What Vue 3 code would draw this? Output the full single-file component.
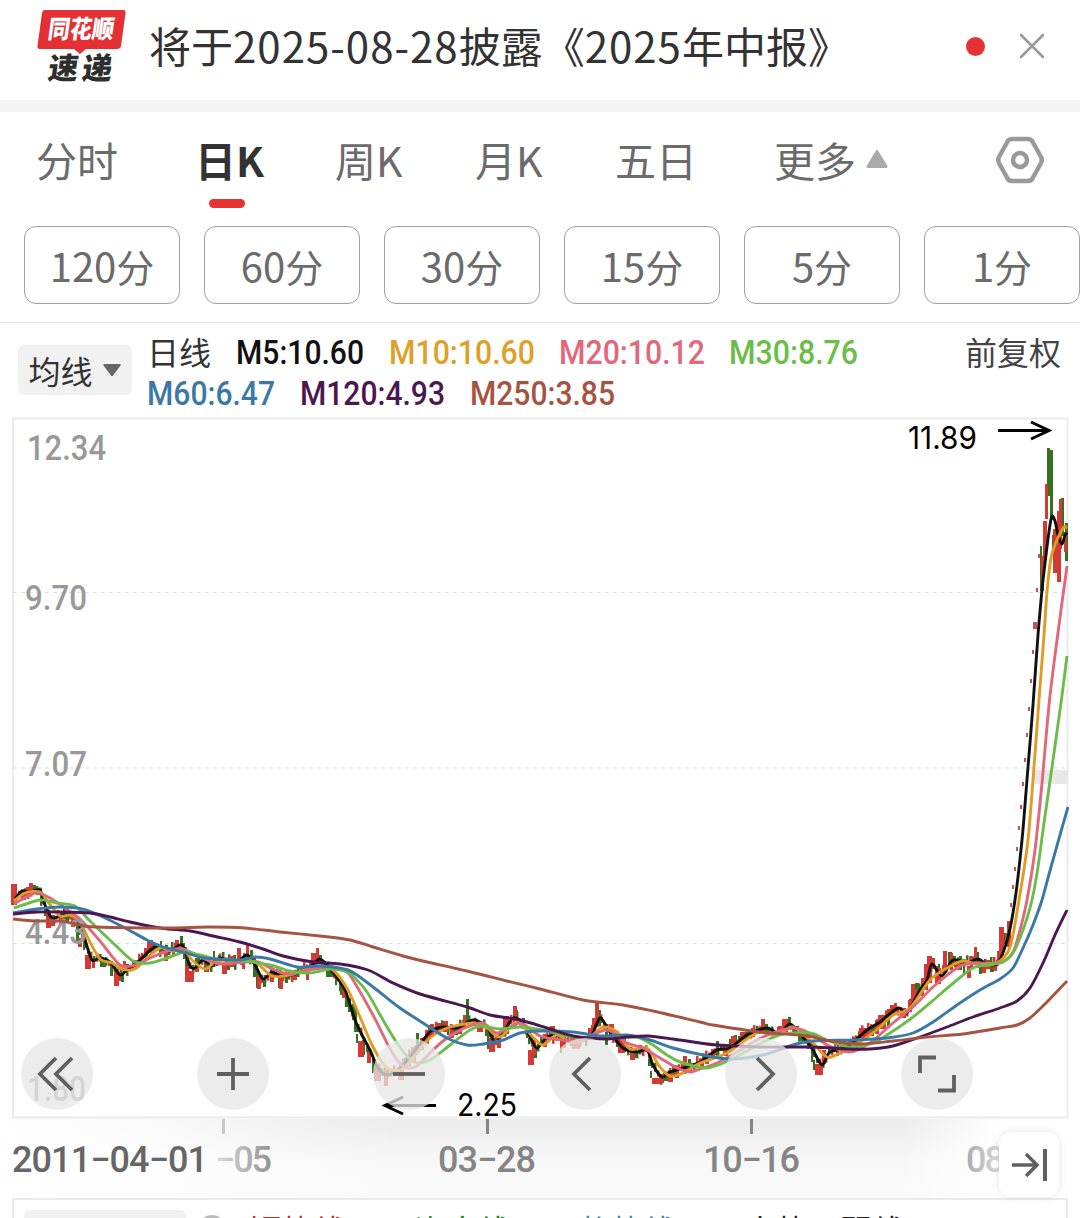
<script setup>
import { ref } from 'vue'

const tabs = ['分时', '日K', '周K', '月K', '五日']
const activeTab = ref('日K')

const periods = [
  { num: '120' },
  { num: '60' },
  { num: '30' },
  { num: '15' },
  { num: '5' },
  { num: '1' },
]

const legendTop = [
  { text: 'M5:10.60', color: '#111111', width: 128, gap: 25 },
  { text: 'M10:10.60', color: '#dda02a', width: 146, gap: 24 },
  { text: 'M20:10.12', color: '#e0687a', width: 146, gap: 24 },
  { text: 'M30:8.76', color: '#6cbc4c', width: 129, gap: 0 },
]

const legendBottom = [
  { text: 'M60:6.47', color: '#3a79a5', width: 128, gap: 25 },
  { text: 'M120:4.93', color: '#4c1650', width: 145, gap: 25 },
  { text: 'M250:3.85', color: '#a55441', width: 145, gap: 0 },
]

const axisLabels = [
  { text: '12.34', x: 27, y: 460, w: 79 },
  { text: '9.70', x: 25, y: 610, w: 62 },
  { text: '7.07', x: 25, y: 776, w: 62 },
  { text: '4.43', x: 25, y: 944, w: 62 },
  { text: '1.80', x: 27, y: 1101, w: 59 },
]

// moving averages as x,y pairs in chart space
const m5 = [15,899,22,891,30,892,40,890,45,905,52,918,62,915,72,914,78,922,85,940,92,960,100,958,110,962,120,975,127,970,140,960,155,947,170,951,182,945,190,966,195,968,203,960,212,966,220,958,235,963,247,955,255,965,263,979,272,972,280,976,295,974,310,967,320,959,332,971,345,990,355,1020,362,1035,370,1050,378,1068,387,1075,400,1068,413,1053,430,1032,443,1027,457,1028,473,1020,487,1027,495,1042,505,1030,513,1018,523,1023,530,1037,537,1048,547,1037,560,1036,573,1043,590,1037,597,1023,601,1018,610,1032,623,1048,637,1052,647,1050,653,1065,662,1077,670,1072,687,1067,700,1062,717,1050,730,1048,747,1035,767,1028,780,1034,790,1024,803,1037,813,1050,822,1065,830,1052,847,1047,867,1030,880,1022,898,1008,907,1013,920,990,927,980,932,964,942,976,953,960,967,963,978,959,987,964,998,963,1008,937,1015,900,1022,840,1028,767,1033,705,1038,635,1042,590,1046,555,1050,525,1052,516,1055,521,1058,535,1062,544,1065,535,1067,533]
const m10 = [14,901,25,893,40,892,48,902,60,916,70,915,80,922,90,942,100,959,112,963,122,969,135,969,147,958,160,948,172,951,183,949,192,960,205,969,215,962,225,963,245,960,257,963,272,976,290,975,305,970,318,966,333,970,348,990,360,1017,373,1047,387,1068,403,1069,417,1053,430,1038,447,1028,473,1023,487,1028,500,1037,517,1022,533,1037,543,1045,557,1035,573,1043,590,1037,603,1027,617,1032,630,1049,647,1048,660,1067,670,1076,683,1073,700,1063,727,1053,757,1033,777,1035,793,1027,813,1043,827,1057,840,1053,860,1042,880,1027,893,1015,910,1008,930,980,947,968,963,961,980,965,997,963,1010,947,1019,900,1028,840,1034,767,1039,700,1044,635,1047,592,1051,558,1057,540,1064,527,1067,528]
const m20 = [14,904,35,893,50,898,65,908,80,919,100,941,120,965,135,965,150,958,170,950,183,949,200,957,220,964,245,962,258,962,275,970,290,974,310,970,330,967,345,971,353,980,373,1015,387,1043,397,1060,407,1068,418,1065,433,1050,447,1038,467,1027,483,1023,497,1033,520,1023,540,1036,563,1040,580,1040,607,1030,627,1043,643,1048,660,1058,677,1068,690,1072,697,1070,717,1063,737,1052,763,1037,793,1028,813,1035,827,1045,850,1052,870,1043,893,1023,913,1007,933,987,957,968,973,963,1000,963,1013,952,1020,930,1027,900,1035,850,1042,783,1049,705,1057,640,1067,566]
const m30 = [14,908,40,900,57,903,75,906,90,921,113,943,133,961,150,963,167,958,185,952,200,955,217,959,245,961,270,965,290,971,310,973,330,969,345,971,353,976,367,992,383,1020,397,1043,410,1059,420,1063,433,1058,450,1045,470,1030,483,1026,500,1029,523,1027,547,1031,573,1037,600,1037,627,1037,640,1038,653,1045,667,1055,680,1062,707,1068,730,1060,763,1042,783,1034,810,1033,827,1040,850,1047,873,1043,890,1033,913,1017,937,997,957,980,973,968,990,964,1003,962,1013,953,1023,930,1032,900,1038,867,1044,823,1052,767,1061,703,1067,656]
const m60 = [13,913,37,909,60,907,82,909,103,917,127,929,147,940,163,947,183,952,205,958,240,960,255,957,270,959,297,967,317,966,333,967,348,970,357,975,377,990,400,1008,423,1023,447,1038,467,1045,483,1044,503,1040,520,1033,540,1031,573,1032,600,1036,627,1035,650,1040,673,1048,703,1055,730,1059,763,1055,793,1045,813,1041,853,1040,887,1038,913,1033,933,1022,957,1005,980,990,1000,979,1013,968,1023,948,1033,925,1042,900,1051,867,1060,835,1068,807]
const m120 = [13,914,37,912,63,912,90,913,110,917,130,922,160,928,190,931,213,936,240,942,263,949,283,956,313,962,340,964,368,970,393,983,420,994,467,1007,490,1015,520,1020,547,1028,573,1036,607,1039,627,1037,648,1036,673,1039,700,1043,717,1045,760,1047,813,1047,847,1049,870,1049,893,1046,920,1037,947,1027,973,1017,1000,1008,1017,1001,1030,988,1043,963,1055,935,1067,910]
const m250 = [13,919,35,921,60,921,80,925,95,927,165,928,210,927,245,928,280,932,320,936,350,940,373,947,403,956,427,962,467,971,507,981,540,989,583,1000,623,1005,653,1011,700,1022,713,1025,760,1032,807,1036,830,1041,860,1044,893,1041,927,1037,963,1034,1000,1028,1017,1025,1030,1018,1047,1002,1067,981]

const averages = [
  { pts: m5, color: '#111111' },
  { pts: m10, color: '#e09c22' },
  { pts: m20, color: '#e0687a' },
  { pts: m30, color: '#6cbc4c' },
  { pts: m60, color: '#3a79a5' },
  { pts: m120, color: '#4c1650' },
  { pts: m250, color: '#a55441' },
]

function linePath(pts) {
  let d = `M${pts[0]} ${pts[1]}`
  for (let i = 0; i < pts.length - 2; i += 2) {
    const at = (k) => {
      const j = Math.min(Math.max(k, 0), pts.length - 2)
      return [pts[j], pts[j + 1]]
    }
    const [p0, p1, p2, p3] = [at(i - 2), at(i), at(i + 2), at(i + 4)]
    const c1 = [p1[0] + (p2[0] - p0[0]) / 7, p1[1] + (p2[1] - p0[1]) / 7]
    const c2 = [p2[0] - (p3[0] - p1[0]) / 7, p2[1] - (p3[1] - p1[1]) / 7]
    d += `C${c1.map((v) => v.toFixed(1))} ${c2.map((v) => v.toFixed(1))} ${p2}`
  }
  return d
}

// x, top, width, height
const redBars = [
  [11,884,6,21],[22,890,4,10],[26,887,3,9],[29,883,4,10],[46,912,5,16],[51,915,4,11],[59,915,4,10],[71,917,4,10],
  [78,938,4,9],[85,955,6,14],[92,959,3,9],[114,970,5,16],[118,972,3,9],[123,961,3,9],[133,960,4,7],[138,956,4,6],
  [144,948,4,9],[147,940,6,12],[164,952,4,9],[172,947,3,9],[175,940,4,12],[185,966,4,16],[188,971,6,11],[195,964,4,8],
  [206,965,3,7],[222,963,5,11],[229,956,5,11],[237,948,4,12],[242,958,3,11],[246,945,3,15],[257,975,4,14],[270,971,4,11],
  [279,974,4,15],[293,970,4,10],[306,968,3,12],[311,953,6,12],[316,948,3,15],[342,991,4,7],[358,1041,6,16],[367,1052,4,11],
  [374,1068,7,13],[384,1070,4,16],[398,1070,6,10],[407,1056,4,10],[412,1048,4,13],[420,1038,4,12],[425,1030,4,14],[430,1024,4,12],[437,1023,4,10],
  [443,1021,5,11],[450,1029,4,9],[457,1025,5,9],[463,1015,3,12],[477,1024,6,8],[489,1038,6,14],[497,1036,4,12],
  [503,1016,6,18],[513,1006,4,22],[528,1050,6,15],[532,1040,4,15],[543,1034,4,13],[550,1026,5,11],[560,1032,6,16],
  [572,1038,8,11],[588,1028,4,12],[592,1018,4,16],[595,1001,4,26],[609,1024,5,10],[618,1037,7,16],[630,1048,5,12],[638,1045,4,7],
  [652,1078,8,6],[659,1074,5,9],[668,1070,5,12],[675,1066,4,12],[683,1056,4,14],[700,1059,4,9],[705,1054,4,10],[711,1049,4,10],
  [724,1048,4,8],[731,1036,5,12],[740,1032,4,12],[751,1028,4,9],[761,1019,4,14],[778,1026,4,8],[782,1019,6,13],
  [815,1064,8,11],[822,1050,4,14],[842,1040,4,8],[848,1039,4,8],[854,1037,4,9],[859,1028,8,10],[867,1028,4,8],[875,1020,4,14],[878,1015,8,14],
  [887,1009,4,10],[890,1005,5,10],[894,1003,3,9],[900,1008,6,10],[908,1000,4,12],[911,984,4,17],[915,990,3,10],
  [921,978,3,18],[924,964,4,26],[927,956,5,27],[932,958,3,11],[935,968,6,16],[943,951,4,19],[950,953,3,17],[956,962,4,8],
  [967,966,4,12],[970,956,3,12],[974,947,3,15],[982,964,4,9],[986,960,4,9],[993,962,4,9],[997,951,3,12],[999,927,5,28],[1007,921,4,26],[1005,934,3,12],
  [1045,484,3,35],[1043,521,4,39],[1041,556,3,35],[1053,529,5,44],[1057,511,4,71],[1059,499,3,50],[1064,532,3,20],
]

const greenBars = [
  [33,885,3,8],[38,888,4,7],[40,893,2,13],[44,900,2,16],[63,915,6,7],[76,923,3,18],[83,938,2,12],[89,956,2,11],
  [100,959,6,8],[110,961,3,15],[121,973,3,9],[126,964,3,7],[160,941,2,14],[165,945,3,9],[180,936,3,11],[183,943,2,16],[185,947,2,33],
  [195,958,3,11],[204,960,3,12],[213,951,2,10],[218,955,2,7],[227,961,3,9],[233,955,3,10],[250,950,3,12],[253,958,3,19],[256,964,2,24],
  [263,979,3,8],[278,972,2,16],[285,974,3,9],[318,955,4,9],[326,970,7,7],[335,972,2,13],[340,981,2,14],[345,993,3,14],[348,998,3,14],[352,1004,2,16],[354,1006,3,26],
  [356,1034,2,9],[362,1040,3,15],[367,1048,3,14],[372,1060,3,13],[404,1058,3,10],[416,1033,3,20],[428,1025,3,9],[455,1027,3,8],
  [466,999,3,24],[485,1026,2,10],[487,1030,2,19],[492,1040,3,10],[515,1010,3,14],[522,1018,3,10],[526,1028,2,10],[534,1048,3,10],
  [560,1040,2,13],[597,1010,4,16],[605,1032,3,13],[616,1031,3,16],[623,1038,3,14],[634,1048,3,10],[648,1059,3,7],[650,1071,2,7],
  [664,1074,4,7],[672,1068,3,9],[688,1059,3,9],[716,1041,3,15],[734,1035,3,9],[745,1032,3,7],[764,1024,4,8],[788,1017,3,13],[793,1026,6,8],
  [800,1032,4,9],[806,1034,3,9],[811,1044,2,18],[813,1060,2,10],[836,1049,3,7],[870,1026,4,10],[887,1018,3,10],[915,983,4,14],
  [938,964,2,16],[948,952,4,14],[953,956,3,8],[959,956,3,14],[963,962,2,11],[976,952,3,12],[979,960,3,14],[990,963,4,9],[1004,933,3,11],
  [1047,448,3,48],[1050,450,3,70],[1040,546,2,45],[1052,535,2,20],[1061,498,3,38],[1065,523,3,38],
]

// one-price limit days on the way up
const limitUps = [[1038,554,4],[1036,588,4],[1033,622,7],[1032,650,4],[1030,679,4],[1028,707,4],[1026,733,4],[1024,758,4],[1022,782,4],[1020,805,4],[1018,826,4],[1016,847,4],[1014,867,4],[1012,885,4],[1010,903,4]]

function priceAt(x) {
  for (let i = 0; i < m5.length - 2; i += 2) {
    if (x <= m5[i + 2]) {
      const t = (x - m5[i]) / (m5[i + 2] - m5[i])
      return m5[i + 1] + t * (m5[i + 3] - m5[i + 1])
    }
  }
  return m5[m5.length - 1]
}

// short daily bars hugging the 5 day average
const dailyBars = []
for (let n = 0; n < 330; n++) {
  const x = 18 + n * 3
  if (x > 1002) break
  const wave = Math.sin(n * 2.3) * 2 + Math.sin(n * 0.71) * 2
  const h = 5 + Math.abs(Math.sin(n * 1.37)) * 4
  const up = priceAt(x + 3) <= priceAt(x - 3)
  dailyBars.push({ x, y: priceAt(x + 2) + wave - h / 2, h, color: up !== (n % 3 === 0) ? '#d33a36' : '#35711f' })
}

const controls = [
  { name: 'first', cx: 57, d: 'M56 1058 L40 1074 L56 1090 M72 1058 L56 1074 L72 1090' },
  { name: 'zoom-in', cx: 233, d: 'M217 1074 H249 M233 1058 V1090' },
  { name: 'zoom-out', cx: 409, d: 'M393 1074 H425' },
  { name: 'prev', cx: 585, d: 'M590 1058 L574 1074 L590 1090' },
  { name: 'next', cx: 761, d: 'M757 1058 L773 1074 L757 1090' },
  { name: 'fullscreen', cx: 937, d: 'M920 1073 V1057.500 H936 M954 1075 V1090.500 H938' },
]
</script>

<template>
  <div class="screen">
    <header class="notice">
      <svg class="logo" width="92" height="84" viewBox="0 0 92 84">
        <path d="M9 2 H87 Q90 2 89.500 5 L85 38 Q84.500 41 81 41 H50 L44 46 L38 41 H4 Q1 41 1.500 38 L6 5 Q6.500 2 9 2Z" fill="#e33033" />
        <text transform="translate(11 30) skewX(-8)" font-size="25" textLength="66" lengthAdjust="spacingAndGlyphs" fill="#fff" class="logo-text">同花顺</text>
        <text transform="translate(11 71) skewX(-8)" font-size="30" fill="#2e2e2e" class="logo-text" textLength="64">速递</text>
      </svg>
      <div class="notice-text">将于<span class="digits">2025-08-28</span>披露《<span class="digits">2025</span>年中报》</div>
      <i class="dot"></i>
      <svg class="close" width="28" height="28" viewBox="0 0 28 28">
        <path d="M3 3 L25 25 M25 3 L3 25" stroke="#999" stroke-width="2.600" stroke-linecap="round" />
      </svg>
    </header>

    <nav class="tabs">
      <button v-for="tab in tabs" :key="tab" class="tab" :class="{ active: tab === activeTab }" @click="activeTab = tab">{{ tab }}</button>
      <button class="tab more">
        更多
        <svg width="24" height="20" viewBox="0 0 24 20"><path d="M11 1.500 Q12 0 13 1.500 L22.500 17 Q23 19 21 19 H3 Q1 19 1.500 17Z" fill="#aaa" /></svg>
      </button>
      <svg class="settings" width="50" height="48" viewBox="0 0 50 48">
        <path d="M17 3 H33 Q36 3 37.500 5.500 L46 21 Q47.500 24 46 27 L37.500 42.500 Q36 45 33 45 H17 Q14 45 12.500 42.500 L4 27 Q2.500 24 4 21 L12.500 5.500 Q14 3 17 3Z" />
        <circle cx="25" cy="24" r="7" />
      </svg>
    </nav>

    <div class="periods">
      <button v-for="p in periods" :key="p.num" class="period"><span>{{ p.num }}</span>分</button>
    </div>

    <section class="legend">
      <button class="indicator">
        均线
        <svg width="20" height="14" viewBox="0 0 20 14"><path d="M2 1 H18 Q19.500 1 18.500 2.500 L11 12.500 Q10 13.500 9 12.500 L1.500 2.500 Q.5 1 2 1Z" fill="#666" /></svg>
      </button>
      <div class="legend-rows">
        <div class="legend-row">
          <span class="legend-name">日线</span>
          <svg v-for="item in legendTop" :key="item.text" :width="item.width" height="41" :style="{ marginRight: item.gap + 'px' }">
            <text x="0" y="29" class="ma" :fill="item.color" :textLength="item.width" lengthAdjust="spacingAndGlyphs">{{ item.text }}</text>
          </svg>
        </div>
        <div class="legend-row second">
          <svg v-for="item in legendBottom" :key="item.text" :width="item.width" height="41" :style="{ marginRight: item.gap + 'px' }">
            <text x="0" y="29" class="ma" :fill="item.color" :textLength="item.width" lengthAdjust="spacingAndGlyphs">{{ item.text }}</text>
          </svg>
        </div>
      </div>
      <span class="adjust">前复权</span>
    </section>

    <svg class="chart" width="1080" height="705" viewBox="0 414 1080 705">
      <rect x="13" y="418.500" width="1054.500" height="699" fill="none" stroke="#ebebeb" stroke-width="2" />
      <path d="M13 592.500 H1067 M13 768 H1067 M13 943.500 H1067" class="grid" />
      <rect x="1033" y="770" width="35" height="14" fill="#e8e8e8" />

      <rect v-for="(b, i) in dailyBars" :key="'d' + i" :x="b.x" :y="b.y" width="2.500" :height="b.h" :fill="b.color" />
      <rect v-for="(b, i) in greenBars" :key="'g' + i" :x="b[0]" :y="b[1]" :width="b[2]" :height="b[3]" fill="#35711f" />
      <rect v-for="(b, i) in redBars" :key="'r' + i" :x="b[0]" :y="b[1]" :width="b[2]" :height="b[3]" fill="#d33a36" />
      <rect v-for="(b, i) in limitUps" :key="'l' + i" :x="b[0]" :y="b[1]" :width="b[2] > 4 ? 4 : 2" :height="b[2]" fill="#c05555" />

      <path v-for="a in averages.slice(0, 4)" :key="a.color" :d="linePath(a.pts)" fill="none" :stroke="a.color" stroke-width="2.900" stroke-linejoin="round" />
      <text v-for="l in axisLabels" :key="l.text" :x="l.x" :y="l.y" class="axis" :textLength="l.w" lengthAdjust="spacingAndGlyphs">{{ l.text }}</text>
      <path v-for="a in averages.slice(4)" :key="a.color" :d="linePath(a.pts)" fill="none" :stroke="a.color" stroke-width="2.900" stroke-linejoin="round" />

      <g class="mark">
        <text x="908" y="448.500" textLength="69" lengthAdjust="spacingAndGlyphs">11.89</text>
        <path d="M998 430.500 H1048 M1031 422 L1049 430.500 L1031 439" />
        <text x="457" y="1115.500" textLength="60" lengthAdjust="spacingAndGlyphs">2.25</text>
        <path d="M436 1105.500 H386 M403 1097 L385 1105.500 L403 1114" />
      </g>

      <g v-for="c in controls" :key="c.name">
        <circle :cx="c.cx" cy="1074" r="36" fill="#e6e6e6" fill-opacity=".76" />
        <path :d="c.d" class="control" />
      </g>
    </svg>

    <svg class="dates" width="1080" height="79" viewBox="0 1119 1080 79">
      <defs>
        <linearGradient id="shadeDown" x1="0" y1="0" x2="0" y2="1">
          <stop offset="0" stop-color="#ebebeb" />
          <stop offset=".55" stop-color="#f8f8f8" />
          <stop offset="1" stop-color="#fafafa" />
        </linearGradient>
        <linearGradient id="fadeLeft">
          <stop offset="0" stop-color="#fff" />
          <stop offset=".35" stop-color="#fff" stop-opacity=".75" />
          <stop offset="1" stop-color="#fff" stop-opacity="0" />
        </linearGradient>
        <linearGradient id="fadeRight">
          <stop offset="0" stop-color="#fff" stop-opacity="0" />
          <stop offset="1" stop-color="#fff" />
        </linearGradient>
        <linearGradient id="dateFade" gradientUnits="userSpaceOnUse" x1="205" y1="0" x2="272" y2="0">
          <stop offset="0" stop-color="#e8e8e8" />
          <stop offset="1" stop-color="#929292" />
        </linearGradient>
        <linearGradient id="endFade" gradientUnits="userSpaceOnUse" x1="966" y1="0" x2="1002" y2="0">
          <stop offset="0" stop-color="#aaa" />
          <stop offset="1" stop-color="#ddd" />
        </linearGradient>
      </defs>
      <rect y="1119" width="1080" height="79" fill="url(#shadeDown)" />
      <rect y="1119" width="400" height="79" fill="url(#fadeLeft)" />
      <rect x="900" y="1119" width="100" height="79" fill="url(#fadeRight)" />
      <rect x="999" y="1119" width="81" height="79" fill="#fff" />
      <path d="M223.500 1119 V1134" stroke="#c8c8c8" stroke-width="3" />
      <path d="M487.500 1119 V1134 M751.500 1119 V1134" stroke="#858585" stroke-width="3" />
      <g class="date">
        <text x="12" y="1172" textLength="196" fill="#666">2011−04−01</text>
        <text x="215" y="1172" textLength="57" fill="url(#dateFade)">−05</text>
        <text x="438" y="1172" textLength="98" fill="#858585">03−28</text>
        <text x="703" y="1172" textLength="97" fill="#858585">10−16</text>
        <text x="966" y="1172" textLength="39" fill="url(#endFade)">08</text>
      </g>
    </svg>

    <section class="sub">
      <div class="sub-btn"></div>
      <i class="help"></i>
      <span class="t-red">短势线</span>
      <span class="t-green">资金线</span>
      <span class="t-blue">趋势线</span>
      <span class="t-black">大势强弱线</span>
    </section>

    <button class="jump">
      <svg width="60" height="66" viewBox="0 0 60 66">
        <path d="M13 33 H38 M27 22 L38 33 L27 44" stroke-width="3.500" />
        <path d="M46 17 V49" stroke-width="4" />
      </svg>
    </button>
  </div>
</template>

<style>
body {
  margin: 0;
  background: #fff;
}
</style>

<style scoped>
.screen {
  position: relative;
  width: 1080px;
  height: 1218px;
  overflow: hidden;
  background: #fff;
  font-family: "Noto Sans CJK SC", sans-serif;
  color: #333;
}

button {
  border: 0;
  padding: 0;
  background: none;
  font-family: inherit;
  cursor: pointer;
}

svg {
  display: block;
  flex: none;
  overflow: visible;
}

.notice {
  box-sizing: border-box;
  height: 112px;
  padding: 0 34px 12px 36px;
  border-bottom: 12px solid #f4f4f4;
  display: flex;
  align-items: center;
}

.logo {
  margin-top: 12px;
}

.logo-text {
  font-weight: 900;
}

.notice-text {
  margin-left: 21px;
  margin-top: 2px;
  font-size: 42px;
  font-weight: 400;
  white-space: nowrap;
  line-height: 60px;
}

.digits {
  letter-spacing: 1px;
}

.dot {
  width: 19px;
  height: 19px;
  margin-left: auto;
  margin-top: 4px;
  border-radius: 50%;
  background: #e63232;
}

.close {
  margin-left: 33px;
  margin-top: 4px;
}

.tabs {
  height: 114px;
  box-sizing: border-box;
  padding: 6px 35px 0 36px;
  display: flex;
  align-items: flex-start;
}

.tab {
  position: relative;
  width: 140px;
  height: 82px;
  line-height: 82px;
  font-size: 41px;
  font-weight: 400;
  color: #6b6b6b;
  text-align: left;
  white-space: nowrap;
}

.tab:first-child {
  width: 159px;
}

.tab.active {
  color: #333;
  font-weight: 700;
}

.tab.active::after {
  content: "";
  position: absolute;
  left: 14px;
  top: 81px;
  width: 36px;
  height: 9px;
  border-radius: 5px;
  background: #e63232;
}

.tab.more {
  display: flex;
  align-items: center;
  gap: 9px;
  margin-left: 19px;
}

.settings {
  margin-left: auto;
  margin-top: 18px;
  fill: none;
  stroke: #999;
  stroke-width: 4.500;
}

.periods {
  display: flex;
  gap: 24px;
  padding-left: 24px;
  height: 96px;
  border-bottom: 1px solid #e6e6e6;
}

.period {
  flex: none;
  box-sizing: border-box;
  width: 156px;
  height: 78px;
  border: 1.500px solid #a0a0a0;
  border-radius: 12px;
  font-size: 38px;
  font-weight: 400;
  color: #6b6b6b;
  line-height: 72px;
}

.period span {
  font-size: 40px;
}

.legend {
  height: 91px;
  box-sizing: border-box;
  display: flex;
  align-items: flex-start;
  padding: 12px 19px 0 18px;
}

.indicator {
  width: 114px;
  height: 50px;
  margin-top: 10px;
  border-radius: 6px;
  background: #f1f1f1;
  color: #333;
  font-size: 32px;
  line-height: 50px;
  display: flex;
  align-items: center;
  justify-content: center;
  gap: 9px;
}

.legend-rows {
  margin-left: 15px;
}

.legend-row {
  display: flex;
  height: 41px;
}

.legend-name {
  width: 89px;
  font-size: 32px;
  line-height: 32px;
}

.ma {
  font: 500 34px Roboto, sans-serif;
}

.adjust {
  margin-left: auto;
  font-size: 32px;
  line-height: 33px;
  color: #444;
}

.grid {
  fill: none;
  stroke: #dedede;
  stroke-width: 1;
  stroke-dasharray: 4 4;
}

.axis {
  font: 500 35px Roboto, sans-serif;
  fill: #999;
}

.mark text {
  font: 400 31px Inter, sans-serif;
  fill: #000;
}

.mark path {
  fill: none;
  stroke: #000;
  stroke-width: 3;
}

.control {
  fill: none;
  stroke: #606060;
  stroke-width: 3.800;
}

.date text {
  font: 500 36px Roboto, sans-serif;
}

.sub {
  box-sizing: border-box;
  width: 1056px;
  height: 60px;
  margin-left: 12px;
  border: 2px solid #ebebeb;
  display: flex;
  align-items: flex-start;
  padding: 10px 0 0 10px;
  font-size: 32px;
  line-height: 38px;
  white-space: nowrap;
}

.sub-btn {
  width: 162px;
  height: 50px;
  border-radius: 6px;
  background: #f1f1f1;
}

.help {
  box-sizing: border-box;
  width: 30px;
  height: 30px;
  margin: 5px 22px 0 11px;
  border: 3px solid #bbb;
  border-radius: 50%;
}

.sub span {
  width: 96px;
  margin-right: 69px;
}

.sub .t-red {
  color: #a03c3c;
}

.sub .t-green {
  color: #2a7a2a;
}

.sub .t-blue {
  color: #4d8196;
}

.sub .t-black {
  color: #222;
}

.jump {
  position: absolute;
  left: 999px;
  top: 1132px;
  width: 60px;
  height: 65px;
  border-radius: 12px;
  background: #fff;
  box-shadow: 0 0 8px rgba(0, 0, 0, 0.1);
}

.jump path {
  fill: none;
  stroke: #606060;
}
</style>
